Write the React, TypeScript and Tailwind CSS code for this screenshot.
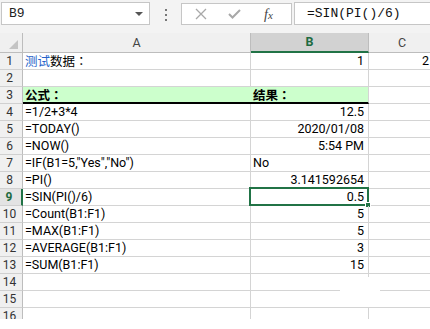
import React from 'react';

type Row = {
  n: number;
  a?: React.ReactNode;
  b?: React.ReactNode;
  bLeft?: boolean;
  c?: string;
  head?: boolean;
  sel?: boolean;
};

// full-width colon, centred like the reference
const Colon = () => <span className="font-['Noto_Sans_CJK_TC',sans-serif]">：</span>;

const rows: Row[] = [
  {
    n: 1,
    a: (
      <>
        <span className="text-[#2663c9]">测试</span>数据<Colon />
      </>
    ),
    b: '1',
    c: '2',
  },
  { n: 2 },
  {
    n: 3,
    a: (
      <>
        公式<Colon />
      </>
    ),
    b: (
      <>
        结果<Colon />
      </>
    ),
    bLeft: true,
    head: true,
  },
  { n: 4, a: '=1/2+3*4', b: '12.5' },
  { n: 5, a: '=TODAY()', b: '2020/01/08' },
  { n: 6, a: '=NOW()', b: '5:54 PM' },
  { n: 7, a: '=IF(B1=5,"Yes","No")', b: 'No', bLeft: true },
  { n: 8, a: '=PI()', b: '3.141592654' },
  { n: 9, a: '=SIN(PI()/6)', b: '0.5', sel: true },
  { n: 10, a: '=Count(B1:F1)', b: '5' },
  { n: 11, a: '=MAX(B1:F1)', b: '5' },
  { n: 12, a: '=AVERAGE(B1:F1)', b: '3' },
  { n: 13, a: '=SUM(B1:F1)', b: '15' },
  { n: 14 },
  { n: 15 },
  { n: 16 },
];

const App: React.FC = () => {
  return (
    <div className="relative w-[430px] h-[329px] overflow-hidden bg-white font-['Roboto','Noto_Sans_CJK_SC',sans-serif] text-[12.5px] text-black">
      {/* formula bar */}
      <div className="flex h-[33px] bg-[#f3f3f3]">
        <div className="ml-[1px] mt-[2px] flex h-[23px] w-[149px] shrink-0 items-center justify-between border border-[#c6c6c6] bg-white pl-[7px] pr-[6px]">
          <span className="font-['Liberation_Mono',monospace] text-[13px] text-[#222]">B9</span>
          <span className="mt-[1px] h-0 w-0 border-x-[4px] border-t-[4px] border-x-transparent border-t-[#555]" />
        </div>
        <div className="ml-[15px] mt-[9px] flex shrink-0 flex-col gap-[3px]">
          <span className="h-[2px] w-[2px] bg-[#777]" />
          <span className="h-[2px] w-[2px] bg-[#777]" />
          <span className="h-[2px] w-[2px] bg-[#777]" />
        </div>
        <div className="ml-[14px] mt-[3px] flex h-[22px] w-[111px] shrink-0 items-center border border-[#c6c6c6] bg-white">
          <svg width="12" height="12" viewBox="0 0 12 12" className="ml-[13px]">
            <path d="M1 1 L11 11 M11 1 L1 11" stroke="#a8a8a8" strokeWidth="1.3" fill="none" />
          </svg>
          <svg width="13" height="10" viewBox="0 0 13 10" className="ml-[21px]">
            <path d="M1 5 L4.5 8.5 L12 1" stroke="#a8a8a8" strokeWidth="2" fill="none" />
          </svg>
          <span className="ml-[23px] font-['Liberation_Serif',serif] text-[14px] italic text-[#444]">
            f<span className="text-[11px]">x</span>
          </span>
        </div>
        <div className="ml-[2px] mt-[2px] flex h-[23px] flex-1 items-center border border-r-0 border-[#c6c6c6] bg-white pl-[12px]">
          <span className="font-['Liberation_Mono',monospace] text-[13px] text-[#111]">=SIN(PI()/6)</span>
        </div>
      </div>

      {/* column headers */}
      <div className="flex h-[20px] bg-[#f0f0f0] text-[12.5px] text-[#444]">
        <div className="flex w-[23px] shrink-0 items-end justify-end border-r border-b border-[#bdbdbd] pr-[4px] pb-[3px]">
          <svg width="9" height="9" viewBox="0 0 9 9">
            <path d="M9 0 L9 9 L0 9 Z" fill="#c4c4c4" />
          </svg>
        </div>
        <div className="flex w-[228px] shrink-0 items-center justify-center border-r border-b border-[#bdbdbd] pt-[1px]">A</div>
        <div className="flex w-[118px] shrink-0 items-center justify-center border-r border-b-2 border-r-[#bdbdbd] border-b-[#217346] bg-[#d2d2d2] pt-[1px] font-bold text-[#1e6b41]">
          B
        </div>
        <div className="flex w-[66px] shrink-0 items-center justify-center border-b border-[#bdbdbd] pt-[1px]">C</div>
      </div>

      {/* grid */}
      <div className="h-[266px] overflow-hidden">
        {rows.map((r) => (
          <div key={r.n} className="flex h-[17px] leading-[16px]">
            <div
              className={`w-[23px] shrink-0 border-b border-r border-b-[#d0d0d0] pr-[3px] text-center text-[12px] ${
                r.sel
                  ? 'border-r-2 border-r-[#217346] bg-[#e3e3e3] font-bold text-[#1e6b41]'
                  : 'border-r-[#bdbdbd] bg-[#f0f0f0] text-[#333]'
              }`}
            >
              {r.n}
            </div>
            <div
              className={`w-[228px] shrink-0 whitespace-nowrap pl-[2px] ${
                r.head
                  ? 'border-b-2 border-b-black bg-[#ccffcc] font-bold'
                  : 'border-r border-b border-[#d4d4d4]'
              }`}
            >
              {r.a}
            </div>
            <div
              className={`relative w-[118px] shrink-0 whitespace-nowrap border-r border-r-[#d4d4d4] ${
                r.bLeft ? 'pl-[2px] text-left' : 'pr-[4px] text-right'
              } ${r.head ? 'border-b-2 border-b-black bg-[#ccffcc] font-bold' : 'border-b border-b-[#d4d4d4]'}`}
            >
              {r.b}
              {r.sel && (
                <>
                  <span className="absolute -top-[2px] -left-[2px] -right-[1px] -bottom-[1px] border-2 border-[#217346]" />
                  <span className="absolute -right-[3px] -bottom-[3px] h-[6px] w-[6px] border border-white bg-[#217346]" />
                </>
              )}
            </div>
            <div className="w-[66px] shrink-0 whitespace-nowrap border-b border-[#d4d4d4] pr-[6px] text-right">
              {r.c}
            </div>
          </div>
        ))}
      </div>

      {/* erased patch in the screenshot */}
      <div className="absolute left-[340px] top-[277px] h-[30px] w-[40px] bg-white" />
    </div>
  );
};

export default App;
